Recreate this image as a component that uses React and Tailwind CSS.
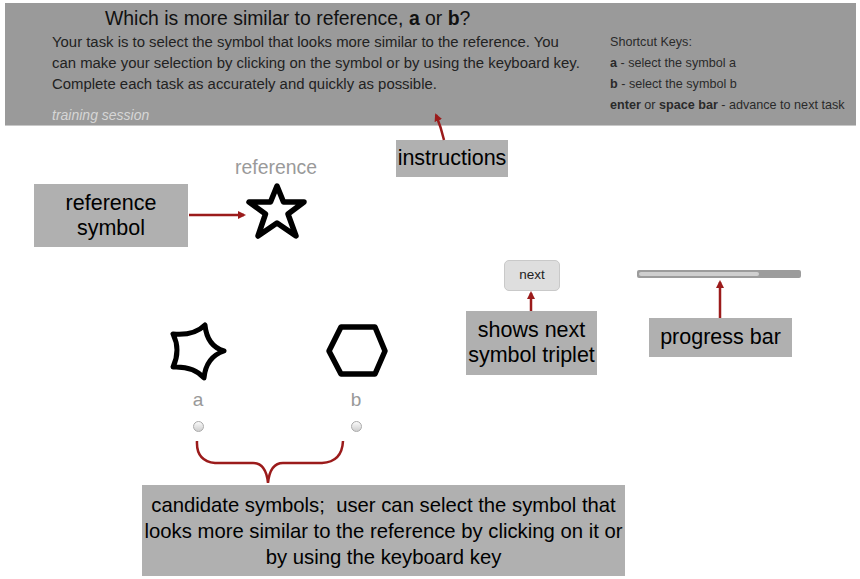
export default function App() {
  const box = "absolute bg-[#b0b0b0] text-black text-[21.5px] leading-[25px] flex items-center justify-center text-center";
  return (
    <div className="relative w-[860px] h-[579px] bg-white overflow-hidden pt-[3px] pl-[5px]" style={{ fontFamily: '"Liberation Sans", Arial, sans-serif' }}>
      {/* header */}
      <div className="w-[851px] h-[123px] bg-[#9a9a9a] border-b border-[#c8c8c8] flex flex-col overflow-hidden">
        <div className="pl-[100px] pt-[3px] text-[19.4px] leading-[24px] text-[#111]">
          Which is more similar to reference, <b>a</b> or <b>b</b>?
        </div>
        <div className="flex">
          <div className="pl-[47px] w-[570px] flex flex-col">
            <div className="pt-[2px] text-[14.9px] leading-[21px] text-[#222] whitespace-nowrap">
              Your task is to select the symbol that looks more similar to the reference. You<br />
              can make your selection by clicking on the symbol or by using the keyboard key.<br />
              Complete each task as accurately and quickly as possible.
            </div>
            <div className="mt-[10px] text-[14px] leading-[20px] italic text-[#d6d6d6]">training session</div>
          </div>
          <div className="pl-[35px] pt-[2px] text-[12.6px] leading-[21px] text-[#2a2a2a] whitespace-nowrap">
            <div>Shortcut Keys:</div>
            <div><b>a</b> - select the symbol a</div>
            <div><b>b</b> - select the symbol b</div>
            <div><b>enter</b> or <b>space bar</b> - advance to next task</div>
          </div>
        </div>
      </div>

      {/* reference */}
      <div className="absolute left-[226px] top-[155px] w-[100px] flex flex-col items-center">
        <div className="text-[19.4px] leading-[24px] text-[#9a9a9a]">reference</div>
        <svg width="90" height="62" viewBox="0 0 90 62">
          <polygon points="46,7 52.5,23 73,23 57,35 65,57 46,44 27,57 34.5,35 18,23 39.5,23" fill="none" stroke="#000" strokeWidth="5.5" strokeLinejoin="round" />
        </svg>
      </div>

      {/* candidates */}
      <div className="absolute left-[158px] top-[318px] flex gap-[78px]">
        <div className="w-[80px] flex flex-col items-center">
          <svg width="80" height="64" viewBox="0 0 80 64">
            <path d="M47,7 Q49,28 66,33 Q48,39 46,60 Q36,48 15,49 Q23,32 15,16 Q36,18 47,7 Z" fill="none" stroke="#000" strokeWidth="5" strokeLinejoin="round" />
          </svg>
          <div className="mt-[6px] text-[19px] leading-[24px] text-[#999]">a</div>
          <div className="mt-[9px] w-[11px] h-[11px] rounded-full border border-[#aaa] bg-gradient-to-b from-[#fafafa] to-[#cfcfcf]" />
        </div>
        <div className="w-[80px] flex flex-col items-center">
          <svg width="80" height="64" viewBox="0 0 80 64">
            <polygon points="13,33 25,9 59,9 69,33 59,56 25,56" fill="none" stroke="#000" strokeWidth="5.5" strokeLinejoin="round" />
          </svg>
          <div className="mt-[6px] text-[19px] leading-[24px] text-[#999]">b</div>
          <div className="mt-[9px] w-[11px] h-[11px] rounded-full border border-[#aaa] bg-gradient-to-b from-[#fafafa] to-[#cfcfcf]" />
        </div>
      </div>

      {/* next button */}
      <div className="absolute left-[504px] top-[260px] w-[56px] h-[31px] rounded-[5px] bg-[#dedede] border border-[#c9c9c9] flex items-center justify-center text-[13.5px] text-[#222]">next</div>

      {/* progress bar */}
      <div className="absolute left-[637px] top-[270px] w-[164px] h-[8px] rounded-[2px] bg-[#9c9c9c] p-[2px]">
        <div className="w-[120px] h-[4px] rounded-[2px] bg-[#cfcfcf]" />
      </div>

      {/* annotation boxes */}
      <div className={box + " left-[396px] top-[140px] w-[112px] h-[37px]"}>instructions</div>
      <div className={box + " left-[34px] top-[184px] w-[154px] h-[63px]"}>reference<br />symbol</div>
      <div className={box + " left-[466px] top-[311px] w-[131px] h-[64px]"}>shows next<br />symbol triplet</div>
      <div className={box + " left-[649px] top-[318px] w-[143px] h-[39px]"}>progress bar</div>
      <div className={box + " left-[142px] top-[485px] w-[483px] h-[91px] !text-[20.3px] !leading-[26px]"}>candidate symbols;&nbsp; user can select the symbol that<br />looks more similar to the reference by clicking on it or<br />by using the keyboard key</div>

      {/* arrows */}
      <svg className="absolute left-0 top-0 pointer-events-none" width="860" height="579" viewBox="0 0 860 579">
        <defs>
          <marker id="ah" markerWidth="8" markerHeight="8" refX="6" refY="4" orient="auto" markerUnits="userSpaceOnUse">
            <path d="M0,0 L8,4 L0,8 Z" fill="#9b1b1b" />
          </marker>
        </defs>
        <g stroke="#9b1b1b" strokeWidth="2.5" fill="none">
          <path d="M444,140 Q441,127 436,115" markerEnd="url(#ah)" />
          <path d="M189,215 L244,215" markerEnd="url(#ah)" />
          <path d="M531,311 L531,293" markerEnd="url(#ah)" />
          <path d="M720,318 L720,282" markerEnd="url(#ah)" />
          <path d="M197,441 Q196,461 215,463 L253,463 Q266,463 268,483 Q270,463 283,463 L322,463 Q342,462 343,441" />
        </g>
      </svg>
    </div>
  );
}
